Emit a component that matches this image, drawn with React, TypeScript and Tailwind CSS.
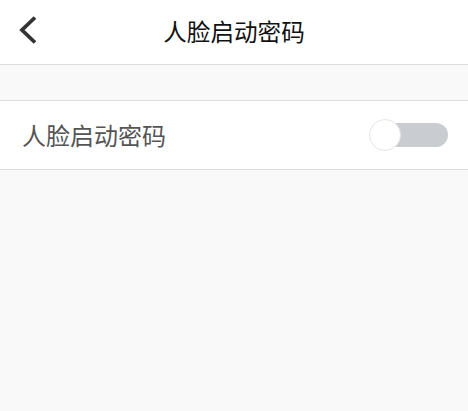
import React from "react";

export default function App() {
  const font = { fontFamily: '"Noto Sans CJK SC", "Noto Sans", sans-serif' };
  return (
    <div className="w-[468px] h-[411px] bg-[#f9f9f9] flex flex-col" style={font}>
      <div className="h-[65px] bg-white border-b border-[#dcdcdc] relative flex items-center justify-center">
        <svg className="absolute left-[17px] top-[14px]" width="24" height="32" viewBox="0 0 24 32" fill="none">
          <path d="M18 3.5 L5 16 L18 28.5" stroke="#333" strokeWidth="3.8" strokeLinecap="butt" strokeLinejoin="miter" />
        </svg>
        <span className="text-[23.6px] leading-none text-[#111] -mt-[1px]">人脸启动密码</span>
      </div>
      <div className="h-[35px]" />
      <div className="h-[70px] bg-white border-y border-[#dcdcdc] flex items-center justify-between pl-[22px] pr-[20px]">
        <span className="text-[24px] leading-none text-[#555]">人脸启动密码</span>
        <div className="relative w-[79px] h-[32px] flex items-center">
          <div className="absolute left-[3px] right-0 top-[4px] h-[24px] rounded-full bg-[#c9ccd0]" />
          <div className="absolute left-0 top-0 w-[32px] h-[32px] rounded-full bg-white border border-[#e6e6e6]" />
        </div>
      </div>
    </div>
  );
}
